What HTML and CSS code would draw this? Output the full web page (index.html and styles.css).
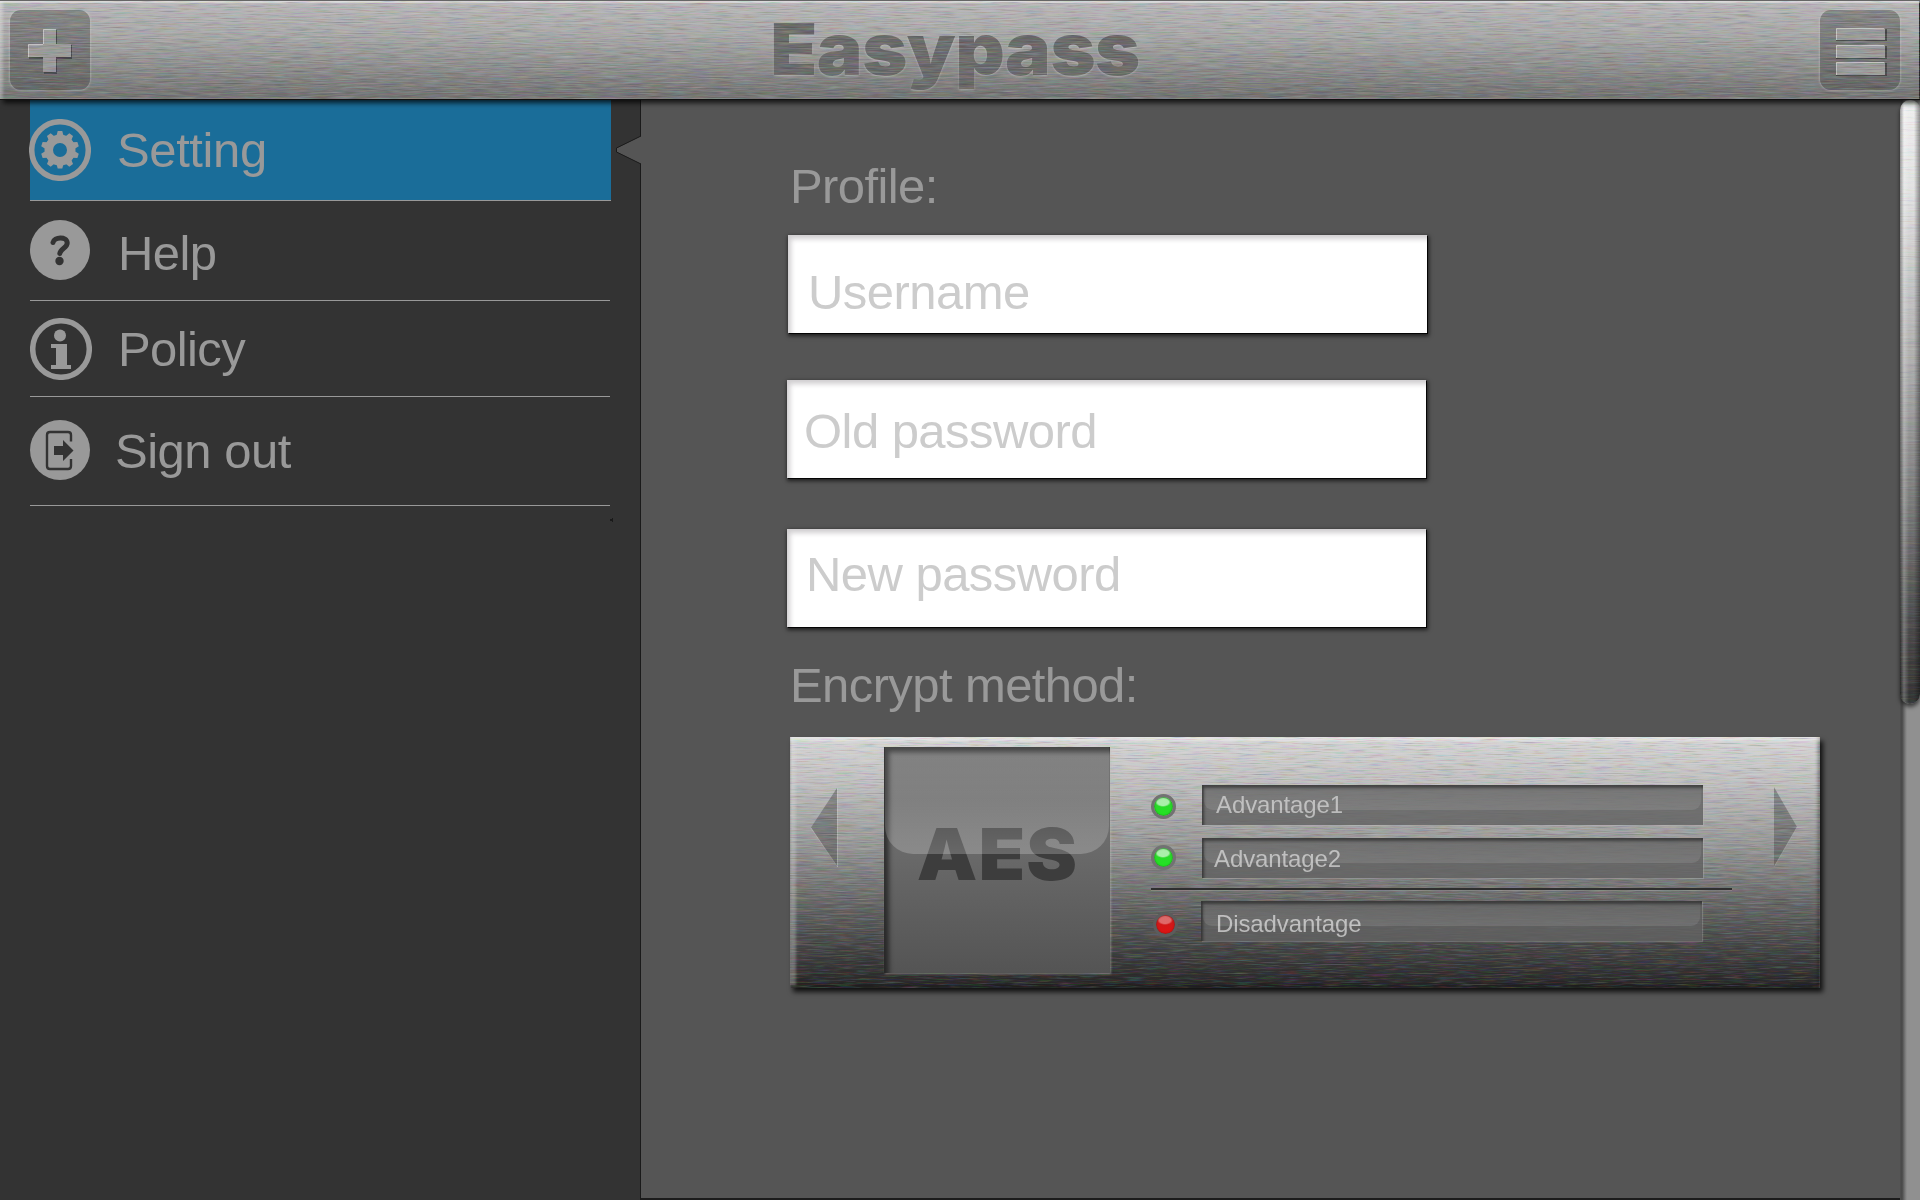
FILE: index.html
```html
<!DOCTYPE html>
<html lang="en">
<head>
<meta charset="utf-8">
<title>Easypass</title>
<link rel="stylesheet" href="styles.css">
</head>
<body>
<svg class="defs" width="0" height="0" aria-hidden="true">
  <filter id="brushed" x="0" y="0" width="100%" height="100%" color-interpolation-filters="sRGB">
    <feTurbulence type="fractalNoise" baseFrequency="0.045 0.8" numOctaves="3" seed="4"/>
    <feColorMatrix type="matrix" values="0.72 0.15 0.15 0 0  0.15 0.68 0.2 0 0  0.12 0.16 0.74 0 0  0 0 0 0 1"/>
  </filter>
</svg>
<header class="topbar metal">
  <button class="tool" aria-label="Add">
    <svg class="plus" width="50" height="50" viewBox="0 0 50 50"><path class="cut" d="M20 5h13v15h15v14H33v15H20V34H5V20h15z"/><path class="face" d="M19 4h13v15h15v13H32v15H19V32H4V19h15z"/><path class="lit" d="M19.500 19V4.500H32M4.500 32V19.500H19"/></svg>
  </button>
  <h1 class="brand">Easypass</h1>
  <button class="tool" aria-label="Menu">
    <svg class="bars" width="54" height="50" viewBox="0 0 54 50"><path class="cut" d="M3 3h51v12H3zM3 20h51v13H3zM3 37h51v13H3z"/><path class="face" d="M3 2h49v12H3zM3 19h49v13H3zM3 36h49v13H3z"/><path class="lit" d="M3.500 14V2.500H51M3.500 32V19.500H51M3.500 49V36.500H51"/></svg>
  </button>
  <svg class="grain" aria-hidden="true"><rect width="100%" height="100%" filter="url(#brushed)"/></svg>
</header>
<main class="layout">
  <nav class="sidebar">
    <a class="item setting">
      <svg class="icon" width="62" height="62" viewBox="-31 -31 62 62"><circle r="28.300" fill="none" stroke="#999" stroke-width="5.500"/><g fill="#999"><path fill-rule="evenodd" d="M-15.500 0a15.500 15.500 0 1 0 31 0a15.500 15.500 0 1 0-31 0M-7 0a7 7 0 1 1 14 0a7 7 0 1 1-14 0"/><path d="M-3.500-14l1.200-5h4.600l1.200 5zM-3.500 14l1.200 4.500h4.600l1.200-4.500z"/><path transform="rotate(36)" d="M-3.500-14l1.200-5h4.600l1.200 5zM-3.500 14l1.200 5h4.600l1.200-5z"/><path transform="rotate(72)" d="M-3.500-14l1.200-5h4.600l1.200 5zM-3.500 14l1.200 5h4.600l1.200-5z"/><path transform="rotate(108)" d="M-3.500-14l1.200-5h4.600l1.200 5zM-3.500 14l1.200 5h4.600l1.200-5z"/><path transform="rotate(144)" d="M-3.500-14l1.200-5h4.600l1.200 5zM-3.500 14l1.200 5h4.600l1.200-5z"/></g></svg>
      <span>Setting</span>
    </a>
    <a class="item help">
      <svg class="icon" width="60" height="60" viewBox="0 0 60 60"><circle cx="30" cy="30" r="30" fill="#999"/><path d="M23 22.500c1-5.500 13.800-6.500 14.200.3c.2 5-6.700 5.500-7.400 10.700" fill="none" stroke="#333" stroke-width="5" stroke-linecap="round"/><circle cx="29.500" cy="41" r="4.200" fill="#333"/></svg>
      <span>Help</span>
    </a>
    <a class="item policy">
      <svg class="icon" width="62" height="62" viewBox="0 0 62 62"><circle cx="31" cy="31" r="28.300" fill="none" stroke="#999" stroke-width="5.500"/><circle cx="30" cy="17.500" r="6" fill="#999"/><path fill="#999" d="M21 26h16v21h4v4H21v-4h5V30h-5z"/></svg>
      <span>Policy</span>
    </a>
    <a class="item signout">
      <svg class="icon" width="60" height="60" viewBox="0 0 60 60"><circle cx="30" cy="30" r="30" fill="#999"/><path d="M41 21.500V15q0-3-3-3H20q-3 0-3 3v31q0 3 3 3h18q3 0 3-3v-7" fill="none" stroke="#333" stroke-width="2.400"/><path fill="#333" d="M24 26h9v-6l10.500 10.500L33 41v-6h-9z"/></svg>
      <span>Sign out</span>
    </a>
  </nav>
  <svg class="dot" width="3" height="4" viewBox="0 0 3 4"><path d="M0 1h2V0h1v4H2V3H0z" fill="#1a1a1a"/></svg>
  <section class="panel">
    <svg class="pointer" width="27" height="30" viewBox="0 0 27 30"><path d="M27 .5L2 13v4l25 12.500z" fill="#555"/><path d="M26 1L1.500 13v4L26 29" fill="none" stroke="#1a1a1a"/></svg>
    <h2 class="label">Profile:</h2>
    <div class="field user">Username</div>
    <div class="field old">Old password</div>
    <div class="field new">New password</div>
    <h2 class="label encrypt">Encrypt method:</h2>
    <div class="card metal">
      <svg class="arrow prev" width="27" height="80" viewBox="0 0 27 80"><path d="M27 0v79L1 39.500z" fill="#464646" fill-opacity=".45"/><path d="M27.500 0v79L1 40" fill="none" stroke="#ddd" stroke-opacity=".3"/></svg>
      <div class="tile"><span>AES</span></div>
      <div class="traits">
        <div class="trait"><i class="led"></i><p>Advantage1</p></div>
        <div class="trait second"><i class="led"></i><p>Advantage2</p></div>
        <hr>
        <div class="trait bad"><i class="led red"></i><p>Disadvantage</p></div>
      </div>
      <svg class="arrow next" width="25" height="80" viewBox="0 0 25 80"><path d="M0 0v80l23-40z" fill="#464646" fill-opacity=".45"/><path d="M0 80l23-40" fill="none" stroke="#ddd" stroke-opacity=".25"/></svg>
      <svg class="grain" aria-hidden="true"><rect width="100%" height="100%" filter="url(#brushed)"/></svg>
    </div>
  </section>
  <div class="scroll"><div class="thumb"><svg class="grain" aria-hidden="true"><rect width="100%" height="100%" filter="url(#brushed)"/></svg></div></div>
</main>
</body>
</html>
```
FILE: styles.css
```css
* { box-sizing: border-box; margin: 0; padding: 0; }
body {
  width: 1920px;
  height: 1200px;
  overflow: hidden;
  background: #333;
  font-family: "Liberation Sans", Arial, sans-serif;
}
.defs { position: absolute; }
.metal { position: relative; isolation: isolate; }
.grain {
  position: absolute;
  inset: 0;
  width: 100%;
  height: 100%;
  mix-blend-mode: hard-light;
  opacity: .3;
  pointer-events: none;
}

.topbar {
  z-index: 2;
  display: flex;
  justify-content: space-between;
  height: 100px;
  padding: 10px 20px 0 10px;
  background: linear-gradient(#b8b6b8, #a7a7a7 35%, #8f8f8f 65%, #707070);
  border-top: 1px solid #666;
  border-bottom: 1px solid #111;
  box-shadow: inset 0 2px 1px rgba(255,255,255,.4), inset 3px 0 3px rgba(255,255,255,.3), inset -1px 0 #222, 3px 3px 5px rgba(0,0,0,.75);
}
.tool {
  display: flex;
  align-items: center;
  justify-content: center;
  width: 80px;
  height: 80px;
  margin-top: -1px;
  border: 0;
  border-radius: 11px;
  background: linear-gradient(#858585, #6f6f6f 70%, #646464);
  box-shadow: 0 0 2px 1px rgba(210,210,210,.35);
}
.tool svg { overflow: visible; }
.plus { margin: 0 0 0 -2px; }
.bars { margin-top: 1px; }
.cut { fill: #484848; }
.face { fill: #9a9a9a; }
.lit { fill: none; stroke: #c4c4c4; }
.brand {
  margin-top: -2px;
  font: 900 72px/80px Inter, "Liberation Sans", sans-serif;
  letter-spacing: -.5px;
  color: #6a6a6a;
  text-shadow: 0 1px 2px rgba(220,220,220,.45);
  transform: scaleX(1.068);
}

.layout { display: flex; height: 1100px; position: relative; }
.sidebar { width: 640px; padding-left: 30px; background: #333; }
.item {
  display: flex;
  align-items: center;
  width: 580px;
  border-bottom: 1px solid #999;
  color: #999;
  font-size: 49px;
  letter-spacing: -.6px;
  white-space: nowrap;
}
.icon { flex: none; }
.setting { height: 101px; width: 581px; background: #1a6d99; }
.setting .icon { margin-left: -1px; }
.setting span { margin-left: 26px; padding-bottom: 1px; letter-spacing: -.4px; }
.help { height: 100px; }
.help .icon { margin-top: -2px; }
.help span { margin-left: 28px; padding-top: 5px; }
.policy { height: 96px; }
.policy span { margin-left: 26px; padding-top: 1px; }
.signout { height: 109px; }
.signout .icon { margin-top: -2px; }
.signout span { margin-left: 25px; padding-bottom: 1px; letter-spacing: -.5px; }
.dot { position: absolute; left: 610px; top: 418px; }

.panel {
  position: relative;
  flex: 1;
  padding: 56px 0 0 146px;
  background: #555;
  border-left: 1px solid #1a1a1a;
  border-bottom: 2px solid #1c1c1c;
}
.pointer { position: absolute; left: -26px; top: 35px; }
.label {
  height: 60px;
  padding-left: 3px;
  font-size: 49px;
  font-weight: 400;
  line-height: 60px;
  letter-spacing: -.6px;
  color: #999;
}
.field {
  width: 639px;
  height: 98px;
  padding-left: 20px;
  background: #fff;
  color: #ccc;
  font-size: 49px;
  letter-spacing: -.55px;
  box-shadow: inset 4px 5px 5px -1px rgba(40,30,40,.22), 1px 1px 0 #050505, 1px 2px 4px 1px rgba(0,0,0,.65);
}
.user { margin: 19px 0 0 1px; line-height: 115px; }
.old { margin-top: 47px; padding-left: 17px; line-height: 102px; }
.new { margin-top: 51px; padding-left: 19px; line-height: 91px; }
.encrypt { margin-top: 28px; }

.card {
  display: flex;
  width: 1030px;
  height: 251px;
  margin: 22px 0 0 3px;
  background: linear-gradient(#d6d5d6, #bfbebf 18%, #969696 43%, #646464 67%, #444 84%, #252425);
  box-shadow: inset 0 4px 2px rgba(255,255,255,.35), inset 0 -3px 2px rgba(30,30,30,.7), inset 6px 0 3px rgba(220,220,220,.35), inset -3px -2px 3px rgba(0,0,0,.25), 3px 4px 5px rgba(0,0,0,.8);
}
.arrow { margin-top: 51px; flex: none; overflow: visible; }
.prev { margin-left: 20px; }
.next { margin-left: 42px; margin-top: 50px; }
.tile {
  position: relative;
  z-index: 1;
  width: 226px;
  height: 226px;
  margin: 10px 0 0 47px;
  background: linear-gradient(#777, #6c6c6c 40%, #545454);
  box-shadow: inset 5px 5px 5px rgba(0,0,0,.55), 1px 1px 2px rgba(190,190,180,.5);
  text-align: center;
}
.tile::after {
  content: "";
  position: absolute;
  inset: 0 1px 119px;
  border-radius: 0 0 28px 28px;
  background: linear-gradient(rgba(255,255,255,.08), rgba(255,255,255,.11) 50%, rgba(255,255,255,.22));
}
.tile span {
  display: block;
  padding-left: 1px;
  font: 900 72px/213px Inter, "Liberation Sans", sans-serif;
  letter-spacing: 1px;
  color: #3d3d3d;
  transform: scaleX(1.06);
}
.traits { position: relative; z-index: 1; width: 581px; margin-left: 41px; padding-top: 48px; }
.trait { display: flex; align-items: center; height: 40px; }
.trait p {
  position: relative;
  width: 501px;
  height: 40px;
  margin-left: 26px;
  padding-left: 14px;
  background: rgba(98,98,98,.82);
  box-shadow: inset 2px 3px 3px rgba(0,0,0,.45), 1px 1px 1px rgba(190,190,190,.3);
  color: #bbb;
  font-size: 24px;
  letter-spacing: -.1px;
  line-height: 40px;
}
.trait p::after {
  content: "";
  position: absolute;
  inset: 0 2px 15px;
  border-radius: 0 0 9px 9px;
  background: linear-gradient(rgba(255,255,255,.02), rgba(255,255,255,.1));
}
.led {
  flex: none;
  width: 25px;
  height: 25px;
  margin-top: 2px;
  border: 3px solid #727272;
  border-radius: 50%;
  background: radial-gradient(ellipse 8px 5px at 9px 5px, rgba(255,255,255,.6) 70%, rgba(255,255,255,0)), linear-gradient(#2fd32f, #22e422);
  background-clip: padding-box;
  box-shadow: inset 0 0 2px #176c17;
}
.second { margin-top: 13px; }
.second p { padding-left: 12px; line-height: 42px; }
.second .led { margin-top: -1px; }
.traits hr { height: 2px; margin-top: 10px; border: 0; background: #2f2f2f; box-shadow: 0 1px rgba(190,190,190,.25); }
.bad { margin-top: 11px; }
.bad p { margin-left: 23px; padding-left: 15px; line-height: 46px; }
.red {
  margin: 7px 0 0 2px;
  border-color: #5c5c5c;
  background: radial-gradient(ellipse 8px 5px at 9px 5px, rgba(255,255,255,.35) 70%, rgba(255,255,255,0)), linear-gradient(#c31c1c, #e11313);
  background-clip: padding-box;
  box-shadow: inset 0 0 2px #6c1717;
}

.scroll {
  width: 20px;
  background: linear-gradient(90deg, #505050, #484848 2px, #777 5px, #909090 7px);
}
.thumb {
  position: relative;
  isolation: isolate;
  overflow: hidden;
  height: 604px;
  border-radius: 10px 9px 10px 10px;
  background:
    linear-gradient(90deg, rgba(0,0,0,.35), rgba(255,255,255,.25) 4px, rgba(255,255,255,0) 9px, rgba(255,255,255,0) 14px, rgba(0,0,0,.4)),
    linear-gradient(#f0f0f0, #e2e2e2 15%, #aaa 45%, #777 68%, #444 90%, #333);
  box-shadow: 0 3px 4px rgba(0,0,0,.6);
}
.thumb .grain { opacity: .15; }
```
